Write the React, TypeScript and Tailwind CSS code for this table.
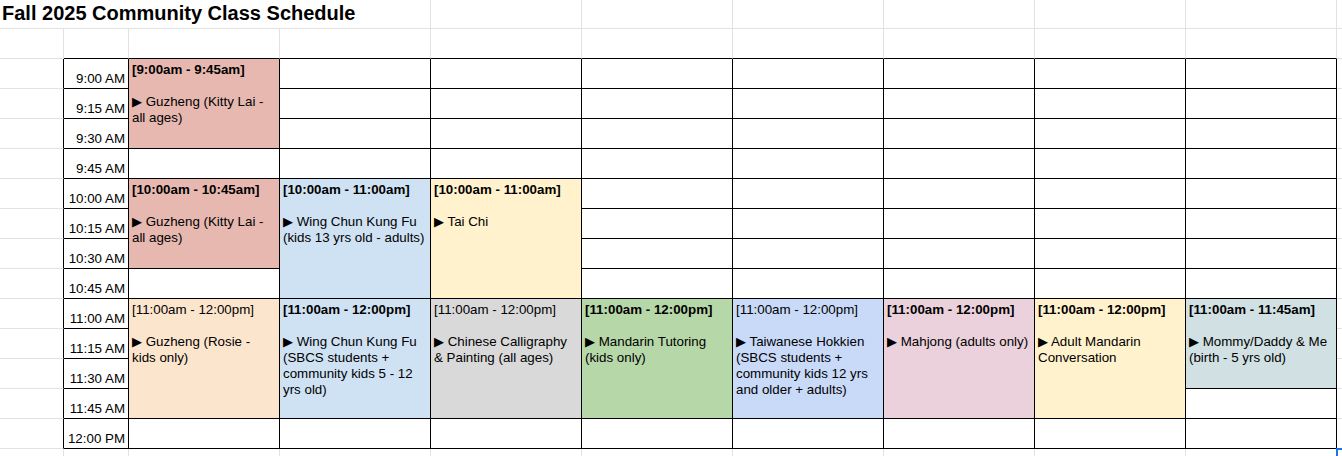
import React from "react";

type Ev = {
  r: number;
  c: number;
  span: number;
  pos: string;
  bg: string;
  bold: boolean;
  time: string;
  lines: string[];
};

const K1 = ["▶ Guzheng (Kitty Lai -", "all ages)"];

const events: Ev[] = [
  { r: 3, c: 3, span: 3, pos: "col-start-3 row-start-3 row-span-3", bg: "bg-[#e6b8af]", bold: true, time: "[9:00am - 9:45am]", lines: K1 },
  { r: 7, c: 3, span: 3, pos: "col-start-3 row-start-7 row-span-3", bg: "bg-[#e6b8af]", bold: true, time: "[10:00am - 10:45am]", lines: K1 },
  { r: 11, c: 3, span: 4, pos: "col-start-3 row-start-11 row-span-4", bg: "bg-[#fce5cd]", bold: false, time: "[11:00am - 12:00pm]", lines: ["▶ Guzheng (Rosie -", "kids only)"] },
  { r: 7, c: 4, span: 4, pos: "col-start-4 row-start-7 row-span-4", bg: "bg-[#cfe2f3]", bold: true, time: "[10:00am - 11:00am]", lines: ["▶ Wing Chun Kung Fu", "(kids 13 yrs old - adults)"] },
  { r: 11, c: 4, span: 4, pos: "col-start-4 row-start-11 row-span-4", bg: "bg-[#cfe2f3]", bold: true, time: "[11:00am - 12:00pm]", lines: ["▶ Wing Chun Kung Fu", "(SBCS students +", "community kids 5 - 12", "yrs old)"] },
  { r: 7, c: 5, span: 4, pos: "col-start-5 row-start-7 row-span-4", bg: "bg-[#fff2cc]", bold: true, time: "[10:00am - 11:00am]", lines: ["▶ Tai Chi"] },
  { r: 11, c: 5, span: 4, pos: "col-start-5 row-start-11 row-span-4", bg: "bg-[#d9d9d9]", bold: false, time: "[11:00am - 12:00pm]", lines: ["▶ Chinese Calligraphy", "& Painting (all ages)"] },
  { r: 11, c: 6, span: 4, pos: "col-start-6 row-start-11 row-span-4", bg: "bg-[#b6d7a8]", bold: true, time: "[11:00am - 12:00pm]", lines: ["▶ Mandarin Tutoring", "(kids only)"] },
  { r: 11, c: 7, span: 4, pos: "col-start-7 row-start-11 row-span-4", bg: "bg-[#c9daf8]", bold: false, time: "[11:00am - 12:00pm]", lines: ["▶ Taiwanese Hokkien", "(SBCS students +", "community kids 12 yrs", "and older + adults)"] },
  { r: 11, c: 8, span: 4, pos: "col-start-8 row-start-11 row-span-4", bg: "bg-[#ead1dc]", bold: true, time: "[11:00am - 12:00pm]", lines: ["▶ Mahjong (adults only)"] },
  { r: 11, c: 9, span: 4, pos: "col-start-9 row-start-11 row-span-4", bg: "bg-[#fff2cc]", bold: true, time: "[11:00am - 12:00pm]", lines: ["▶ Adult Mandarin", "Conversation"] },
  { r: 11, c: 10, span: 3, pos: "col-start-10 row-start-11 row-span-3", bg: "bg-[#d0e0e3]", bold: true, time: "[11:00am - 11:45am]", lines: ["▶ Mommy/Daddy & Me", "(birth - 5 yrs old)"] },
];

const times = [
  "9:00 AM", "9:15 AM", "9:30 AM", "9:45 AM",
  "10:00 AM", "10:15 AM", "10:30 AM", "10:45 AM",
  "11:00 AM", "11:15 AM", "11:30 AM", "11:45 AM",
  "12:00 PM",
];

function borderFor(r: number, c: number): string {
  if (r === 16) {
    if (c === 11) return "";
    return "border-r border-r-[#e2e2e2]";
  }
  if (c === 11) return "border-b border-b-[#e2e2e2]";
  if (r === 1) return "border-r border-b border-r-[#e2e2e2] border-b-[#e2e2e2]";
  if (r === 2) {
    if (c === 1) return "border-r border-b border-r-[#e2e2e2] border-b-[#e2e2e2]";
    return "border-r border-b border-r-[#e2e2e2] border-b-black";
  }
  if (c === 1) return "border-r border-b border-r-black border-b-[#e2e2e2]";
  return "border-r border-b border-r-black border-b-black";
}

export default function App() {
  const covered = new Set<string>();
  const starts = new Map<string, Ev>();
  for (const e of events) {
    starts.set(`${e.r}-${e.c}`, e);
    for (let i = 0; i < e.span; i++) covered.add(`${e.r + i}-${e.c}`);
  }

  const cells: React.ReactNode[] = [];
  for (let r = 1; r <= 16; r++) {
    for (let c = 1; c <= 11; c++) {
      const key = `${r}-${c}`;
      if (r === 1 && c >= 2 && c <= 4) continue;
      if (r === 1 && c === 1) {
        cells.push(
          <div
            key={key}
            className="col-span-4 flex items-end border-r border-b border-r-[#e2e2e2] border-b-[#e2e2e2] pl-[2px] pb-[3px] text-[20px] font-bold leading-[23px] whitespace-nowrap"
          >
            Fall 2025 Community Class Schedule
          </div>
        );
        continue;
      }
      const ev = starts.get(key);
      if (ev) {
        cells.push(
          <div
            key={key}
            className={`${ev.pos} ${ev.bg} border-r border-b border-r-black border-b-black pl-[3px] pt-[3px] text-[13.33px] leading-[16px] whitespace-nowrap overflow-hidden`}
          >
            <div className={ev.bold ? "font-bold" : ""}>{ev.time}</div>
            <div className="h-[16px]" />
            {ev.lines.map((l, i) => (
              <div key={i}>{l}</div>
            ))}
          </div>
        );
        continue;
      }
      if (covered.has(key)) continue;
      if (c === 2 && r >= 3 && r <= 15) {
        cells.push(
          <div
            key={key}
            className={`${borderFor(r, c)} flex items-end justify-end pr-[3px] pb-[1px] text-[13.33px] leading-[16px] whitespace-nowrap`}
          >
            {times[r - 3]}
          </div>
        );
        continue;
      }
      cells.push(<div key={key} className={borderFor(r, c)} />);
    }
  }

  return (
    <div className="relative w-[1342px] h-[456px] overflow-hidden bg-white text-black font-['Liberation_Sans',Arial,sans-serif]">
      <div className="grid h-full grid-cols-[64px_65px_repeat(8,151px)_1fr] grid-rows-[29px_30px_repeat(13,30px)_1fr]">
        {cells}
      </div>
      <div className="absolute left-[1336px] top-[448px] h-[8px] w-[6px] border-l-2 border-t-2 border-[#1a73e8]" />
    </div>
  );
}
